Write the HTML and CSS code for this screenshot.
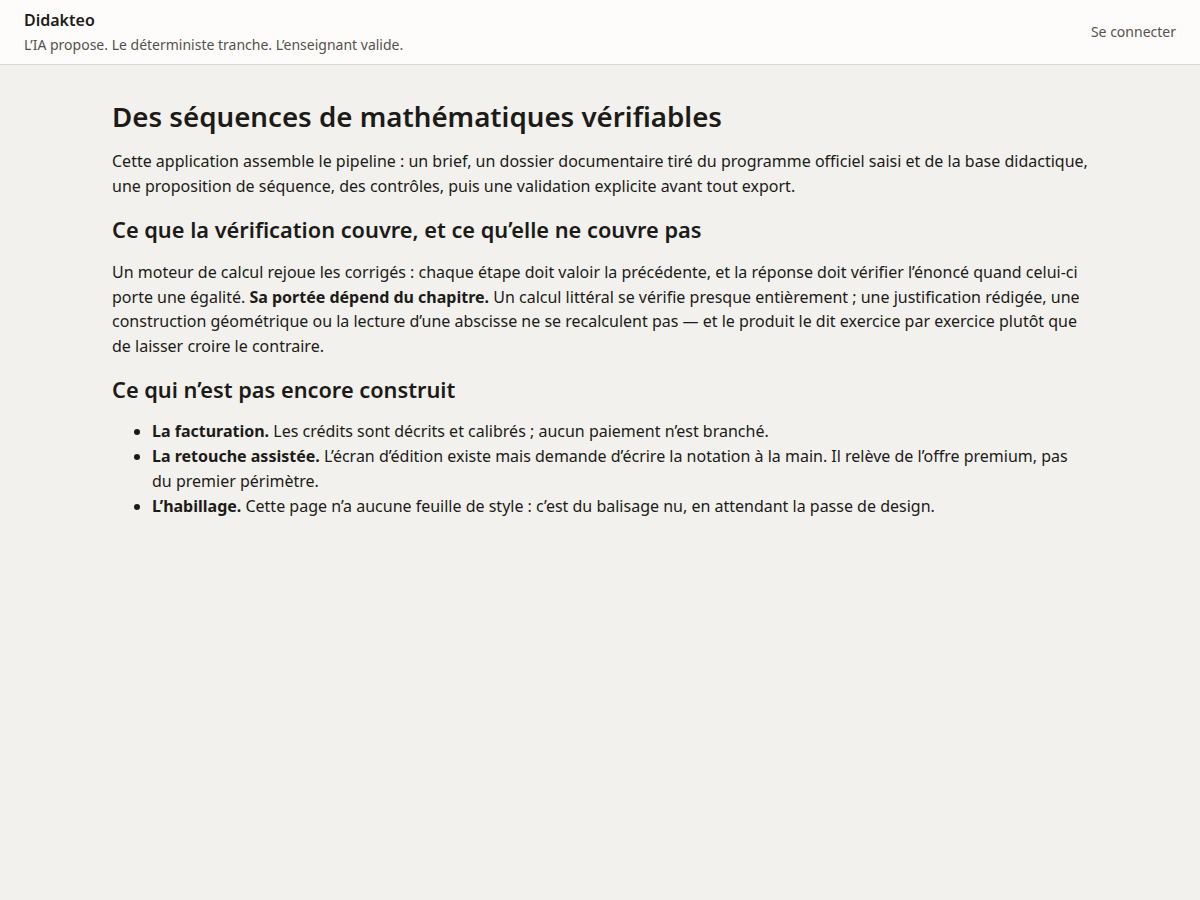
FILE: index.html
```html
<!DOCTYPE html>
<html lang="fr">
<head>
<meta charset="utf-8">
<title>Didakteo</title>
<link rel="stylesheet" href="styles.css">
</head>
<body>
<header class="topbar">
  <div class="brand-block">
    <div class="brand">Didakteo</div>
    <div class="tagline">L’IA propose. Le déterministe tranche. L’enseignant valide.</div>
  </div>
  <a class="login" href="#">Se connecter</a>
</header>
<main class="content">
  <h1 class="title">Des séquences de mathématiques vérifiables</h1>
  <p class="text">Cette application assemble le pipeline : un brief, un dossier documentaire tiré du programme officiel saisi et de la base didactique, une proposition de séquence, des contrôles, puis une validation explicite avant tout export.</p>
  <h2 class="subtitle">Ce que la vérification couvre, et ce qu’elle ne couvre pas</h2>
  <p class="text">Un moteur de calcul rejoue les corrigés : chaque étape doit valoir la précédente, et la réponse doit vérifier l’énoncé quand celui-ci porte une égalité. <strong>Sa portée dépend du chapitre.</strong> Un calcul littéral se vérifie presque entièrement ; une justification rédigée, une construction géométrique ou la lecture d’une abscisse ne se recalculent pas — et le produit le dit exercice par exercice plutôt que de laisser croire le contraire.</p>
  <h2 class="subtitle">Ce qui n’est pas encore construit</h2>
  <ul class="list">
    <li><strong>La facturation.</strong> Les crédits sont décrits et calibrés ; aucun paiement n’est branché.</li>
    <li><strong>La retouche assistée.</strong> L’écran d’édition existe mais demande d’écrire la notation à la main. Il relève de l’offre premium, pas du premier périmètre.</li>
    <li><strong>L’habillage.</strong> Cette page n’a aucune feuille de style : c’est du balisage nu, en attendant la passe de design.</li>
  </ul>
</main>
</body>
</html>
```

FILE: styles.css
```css
html, body {
  margin: 0;
  padding: 0;
}
body {
  background: #f2f1ed;
  color: #1c1b18;
  font-family: "Noto Sans", "Open Sans", sans-serif;
  min-height: 900px;
}
.topbar {
  display: flex;
  justify-content: space-between;
  align-items: center;
  background: #fdfcfa;
  border-bottom: 1px solid #d9d6d0;
  padding: 8px 24px 9px;
  height: 47px;
}
.brand-block {
  display: flex;
  flex-direction: column;
  gap: 3px;
}
.brand {
  font-size: 16px;
  font-weight: 600;
  line-height: 24px;
  color: #1c1b18;
}
.tagline {
  font-size: 14px;
  line-height: 20px;
  color: #55524c;
}
.login {
  font-size: 14px;
  color: #55524c;
  text-decoration: none;
}
.content {
  max-width: 976px;
  margin: 0 auto;
  padding: 34px 24px 32px;
}
.title {
  font-size: 27.7px;
  font-weight: 600;
  line-height: 35px;
  margin: 0 0 15px;
}
.text {
  font-size: 16px;
  line-height: 1.55;
  margin: 0 0 17px;
}
.text strong, .list strong {
  font-weight: 700;
}
.subtitle {
  font-size: 21.75px;
  font-weight: 600;
  line-height: 1.3;
  margin: 0 0 16px;
}
.list {
  font-size: 16px;
  line-height: 1.55;
  margin: -1px 0 0;
  padding-left: 40px;
}
```
